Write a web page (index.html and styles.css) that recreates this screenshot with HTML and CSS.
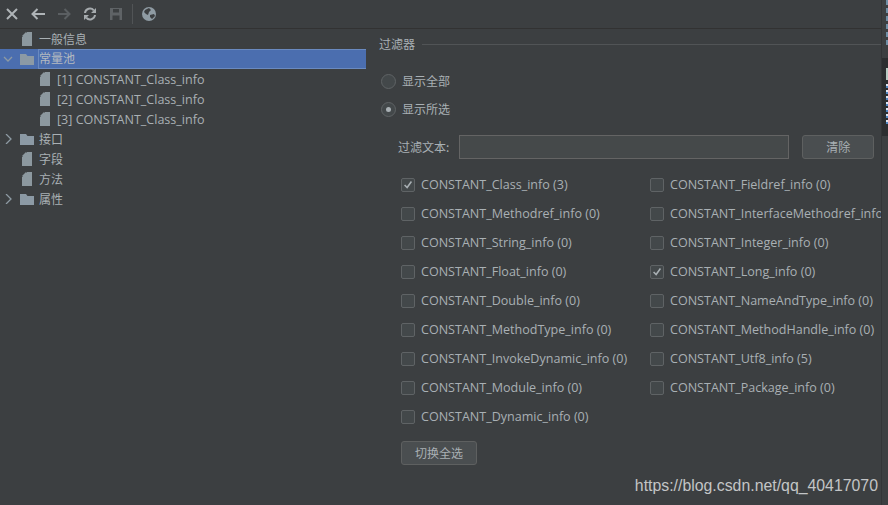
FILE: index.html
```html
<!DOCTYPE html>
<html lang="en">
<head>
    <meta charset="UTF-8">
    <title>常量池</title>
    <link rel="stylesheet" href="styles.css">
</head>
<body>
    <div class="toolbar">
        <svg class="tool" viewBox="0 0 16 16"><path d="M3 3l10 10M13 3L3 13" stroke="#afb4b7" stroke-width="2" fill="none"/></svg>
        <svg class="tool" viewBox="0 0 16 16"><path d="M15 8H2M7.500 3L2.500 8l5 5" stroke="#afb4b7" stroke-width="2" fill="none"/></svg>
        <svg class="tool" viewBox="0 0 16 16"><path d="M2 8h12M8.500 3l5 5-5 5" stroke="#5b5f62" stroke-width="2" fill="none"/></svg>
        <svg class="tool" viewBox="0 0 16 16"><path d="M3 7a5 5 0 0 1 8.800-2.600M13 9a5 5 0 0 1-8.800 2.600" stroke="#a6abae" stroke-width="2" fill="none"/><path d="M14 2v5H9zM2 14V9h5z" fill="#a6abae"/></svg>
        <svg class="tool" viewBox="0 0 16 16"><path d="M2 2h12v12H2z" fill="#5f6366"/><path d="M5 3h6v3.500H5zM4.500 9.500h7V14h-7z" fill="#3c3f41"/></svg>
        <span class="tool-sep"></span>
        <svg class="tool" viewBox="0 0 16 16"><circle cx="8" cy="8" r="7" fill="#8f9ba3"/><path d="M4 4l4-2 2 2-2 2-1 3-2-1-2-2zM9 9l4-1 1 2-3 3-2-2z" fill="#3c3f41"/></svg>
    </div>

    <div class="main">
        <div class="tree">
            <div class="row row-top">
                <svg class="file" viewBox="0 0 10 14"><path d="M5 0h5v14H0V5zM0 4l4-4v4z" fill="#8c989f"/></svg>
                <span class="zh">一般信息</span>
            </div>
            <div class="row row-selected">
                <svg class="arrow" viewBox="0 0 10 10"><path d="M1 3l4 4 4-4" stroke="#8d9aa3" stroke-width="1.300" fill="none"/></svg>
                <svg class="folder" viewBox="0 0 14 11"><path d="M0 0h6l1.500 2H14v9H0z" fill="#8c9aa5"/></svg>
                <span class="zh row-focus">常量池</span>
            </div>
            <div class="row row-child">
                <svg class="file" viewBox="0 0 10 14"><path d="M5 0h5v14H0V5zM0 4l4-4v4z" fill="#8c989f"/></svg>
                <span>[1] CONSTANT_Class_info</span>
            </div>
            <div class="row row-child">
                <svg class="file" viewBox="0 0 10 14"><path d="M5 0h5v14H0V5zM0 4l4-4v4z" fill="#8c989f"/></svg>
                <span>[2] CONSTANT_Class_info</span>
            </div>
            <div class="row row-child">
                <svg class="file" viewBox="0 0 10 14"><path d="M5 0h5v14H0V5zM0 4l4-4v4z" fill="#8c989f"/></svg>
                <span>[3] CONSTANT_Class_info</span>
            </div>
            <div class="row">
                <svg class="arrow" viewBox="0 0 10 10"><path d="M3 0l5 5-5 5" stroke="#8d9aa3" stroke-width="1.300" fill="none"/></svg>
                <svg class="folder" viewBox="0 0 14 11"><path d="M0 0h6l1.500 2H14v9H0z" fill="#8c9aa5"/></svg>
                <span class="zh">接口</span>
            </div>
            <div class="row row-top">
                <svg class="file" viewBox="0 0 10 14"><path d="M5 0h5v14H0V5zM0 4l4-4v4z" fill="#8c989f"/></svg>
                <span class="zh">字段</span>
            </div>
            <div class="row row-top">
                <svg class="file" viewBox="0 0 10 14"><path d="M5 0h5v14H0V5zM0 4l4-4v4z" fill="#8c989f"/></svg>
                <span class="zh">方法</span>
            </div>
            <div class="row">
                <svg class="arrow" viewBox="0 0 10 10"><path d="M3 0l5 5-5 5" stroke="#8d9aa3" stroke-width="1.300" fill="none"/></svg>
                <svg class="folder" viewBox="0 0 14 11"><path d="M0 0h6l1.500 2H14v9H0z" fill="#8c9aa5"/></svg>
                <span class="zh">属性</span>
            </div>
        </div>

        <div class="filter">
            <div class="filter-title">
                <span class="zh">过滤器</span>
                <div class="filter-line"></div>
            </div>

            <label class="radio-row"><span class="radio"></span><span class="zh">显示全部</span></label>
            <label class="radio-row"><span class="radio radio-on"></span><span class="zh">显示所选</span></label>

            <div class="search">
                <span class="zh">过滤文本:</span>
                <div class="search-input"></div>
                <div class="btn btn-clear zh">清除</div>
            </div>

            <div class="checks">
                <label class="check-row"><span class="check check-on"><svg viewBox="0 0 14 14"><path d="M3 7l3 3 5-7" stroke="#a9b0b4" stroke-width="1.800" fill="none"/></svg></span>CONSTANT_Class_info (3)</label>
                <label class="check-row"><span class="check"></span>CONSTANT_Fieldref_info (0)</label>
                <label class="check-row"><span class="check"></span>CONSTANT_Methodref_info (0)</label>
                <label class="check-row"><span class="check"></span>CONSTANT_InterfaceMethodref_info</label>
                <label class="check-row"><span class="check"></span>CONSTANT_String_info (0)</label>
                <label class="check-row"><span class="check"></span>CONSTANT_Integer_info (0)</label>
                <label class="check-row"><span class="check"></span>CONSTANT_Float_info (0)</label>
                <label class="check-row"><span class="check check-on"><svg viewBox="0 0 14 14"><path d="M3 7l3 3 5-7" stroke="#a9b0b4" stroke-width="1.800" fill="none"/></svg></span>CONSTANT_Long_info (0)</label>
                <label class="check-row"><span class="check"></span>CONSTANT_Double_info (0)</label>
                <label class="check-row"><span class="check"></span>CONSTANT_NameAndType_info (0)</label>
                <label class="check-row"><span class="check"></span>CONSTANT_MethodType_info (0)</label>
                <label class="check-row"><span class="check"></span>CONSTANT_MethodHandle_info (0)</label>
                <label class="check-row"><span class="check"></span>CONSTANT_InvokeDynamic_info (0)</label>
                <label class="check-row"><span class="check"></span>CONSTANT_Utf8_info (5)</label>
                <label class="check-row"><span class="check"></span>CONSTANT_Module_info (0)</label>
                <label class="check-row"><span class="check"></span>CONSTANT_Package_info (0)</label>
                <label class="check-row"><span class="check"></span>CONSTANT_Dynamic_info (0)</label>
            </div>

            <div class="btn btn-toggle zh">切换全选</div>
        </div>
    </div>

    <div class="edge">
        <div class="edge-bits edge-bits-top"></div>
        <div class="edge-tab">
            <div class="edge-bits edge-bits-light"></div>
            <div class="edge-bits edge-bits-blue"></div>
        </div>
    </div>
    <div class="watermark">https://blog.csdn.net/qq_40417070</div>
</body>
</html>
```

FILE: styles.css
```css
* {
    margin: 0;
    padding: 0;
    box-sizing: border-box;
}

body {
    width: 888px;
    height: 505px;
    overflow: hidden;
    background-color: #3c3f41;
    color: #a9b0b4;
    font-family: "Open Sans", "Noto Sans CJK SC", sans-serif;
    font-size: 12.55px;
    position: relative;
}

.zh {
    font-family: "Noto Sans CJK SC", sans-serif;
    font-size: 12px;
    padding-bottom: 2px;
}

.toolbar {
    height: 29px;
    display: flex;
    align-items: center;
    padding: 0 0 1px 4px;
    gap: 10px;
    border-bottom: 1px solid #323232;
}

.tool {
    width: 16px;
    height: 16px;
}

.tool-sep {
    width: 1px;
    height: 20px;
    margin: 0 -2px;
    background-color: #515456;
}

.main {
    display: flex;
}

.tree {
    width: 366px;
    flex-shrink: 0;
}

.row {
    height: 20px;
    display: flex;
    align-items: center;
    padding-left: 3px;
}

.row-top {
    padding-left: 22px;
}

.row-child {
    padding-left: 40px;
}

.row-selected {
    background-color: #4b6eaf;
    color: #b4bac0;
}

.row-focus {
    flex: 1;
    align-self: stretch;
    margin-left: -1px;
    padding-bottom: 0;
    line-height: 16px;
    border: 1px solid #6a8ac0;
    border-right: none;
}

.arrow {
    width: 10px;
    height: 10px;
    margin-right: 7px;
}

.file {
    width: 10px;
    height: 14px;
    margin-right: 7px;
}

.folder {
    width: 14px;
    height: 11px;
    margin-right: 5px;
}

.filter {
    flex: 1;
    padding: 5px 0 0 13px;
}

.filter-title {
    height: 20px;
    display: flex;
    align-items: center;
    gap: 7px;
}

.filter-line {
    flex: 1;
    height: 1px;
    background-color: #515456;
}

.radio-row {
    height: 28px;
    display: flex;
    align-items: center;
    gap: 6px;
    padding-left: 2px;
}

.filter-title + .radio-row {
    margin-top: 13px;
}

.radio {
    width: 15px;
    height: 15px;
    border: 1px solid #5f6365;
    border-radius: 50%;
    background-color: #43484a;
    position: relative;
}

.radio-on::after {
    content: "";
    position: absolute;
    left: 4px;
    top: 4px;
    width: 5px;
    height: 5px;
    border-radius: 50%;
    background-color: #a9b0b4;
}

.search {
    display: flex;
    align-items: center;
    margin-top: 12px;
    padding-left: 19px;
}

.search-input {
    width: 330px;
    height: 24px;
    margin-left: 10px;
    border: 1px solid #646464;
    background-color: #45494a;
}

.btn {
    height: 24px;
    display: flex;
    align-items: center;
    justify-content: center;
    border: 1px solid #5e6060;
    border-radius: 3px;
    background-color: #4a4e50;
}

.btn-clear {
    width: 72px;
    margin-left: 13px;
}

.checks {
    display: grid;
    grid-template-columns: 249px 1fr;
    grid-auto-rows: 29px;
    margin-top: 11px;
    padding-left: 22px;
}

.check-row {
    display: flex;
    align-items: center;
    gap: 6px;
    white-space: nowrap;
}

.check {
    width: 14px;
    height: 14px;
    border: 1px solid #5f6365;
    border-radius: 2px;
    background-color: #43484a;
    flex-shrink: 0;
}

.check svg {
    display: block;
    width: 12px;
    height: 12px;
}

.btn-toggle {
    width: 76px;
    margin: 10px 0 0 22px;
}

/* window edge on the right, sits over the clipped checkbox text */
.edge {
    position: absolute;
    top: 0;
    right: 0;
    width: 7px;
    height: 505px;
    border-left: 1px solid #333537;
    background-color: #3c3f41;
}

.edge-bits {
    position: absolute;
    right: 0;
    width: 2px;
}

.edge-bits-top {
    top: 0;
    height: 48px;
    background: repeating-linear-gradient(#6f8fa6 0 5px, #3c3f41 5px 8px);
}

.edge-tab {
    position: absolute;
    top: 58px;
    left: 0;
    right: 0;
    height: 78px;
    background-color: #2c2e30;
}

.edge-bits-light {
    top: 10px;
    height: 12px;
    background-color: #b9cbc4;
}

.edge-bits-blue {
    top: 26px;
    height: 42px;
    background: repeating-linear-gradient(#dce6f2 0 2px, #4f86c0 2px 4px, #2c2e30 4px 6px);
}

.watermark {
    position: absolute;
    right: 10px;
    bottom: 10px;
    font-family: "Liberation Sans", sans-serif;
    font-size: 15.85px;
    color: #c3c5c6;
}
```
